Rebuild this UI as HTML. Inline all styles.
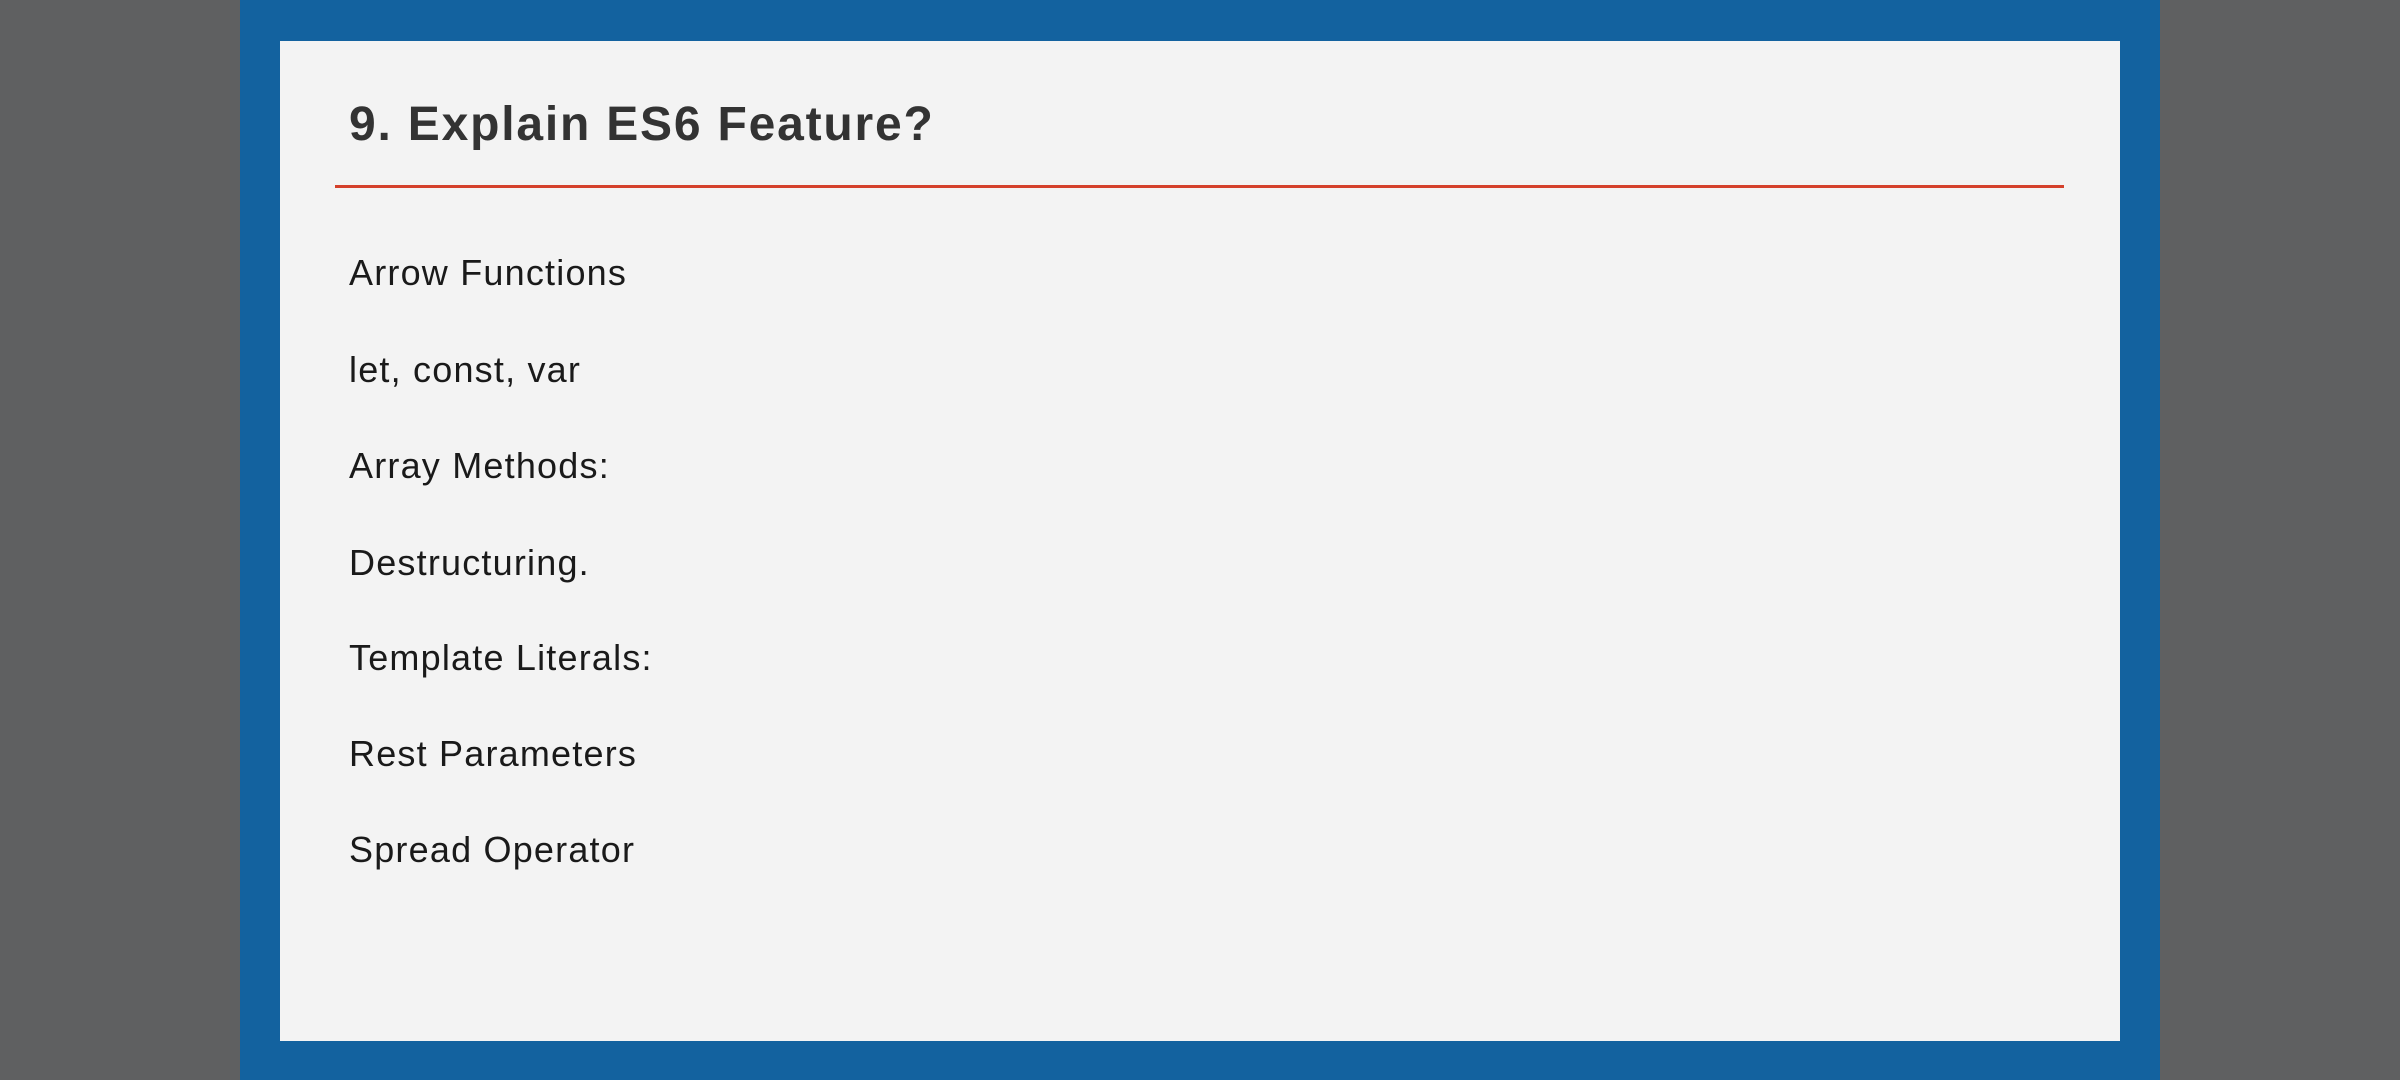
<!DOCTYPE html>
<html><head><meta charset="utf-8"><style>
html,body{margin:0;padding:0;}
body{width:2400px;height:1080px;background:#5f6061;position:relative;overflow:hidden;font-family:"Liberation Sans",sans-serif;}
.blue{position:absolute;left:240px;top:0;width:1920px;height:1080px;background:#13629f;}
.card{position:absolute;left:280px;top:41px;width:1840px;height:1000px;background:#f3f3f3;}
.title{position:absolute;left:349px;top:92px;font-size:48px;font-weight:bold;color:#333;line-height:66px;letter-spacing:1.8px;}
.line{position:absolute;left:335px;top:185px;width:1729px;height:3px;background:#d4402b;}
.item{position:absolute;left:349px;font-size:36px;color:#1a1a1a;line-height:44px;letter-spacing:1.2px;}
</style></head><body>
<div class="blue"></div>
<div class="card"></div>
<div class="title">9. Explain ES6 Feature?</div>
<div class="line"></div>
<div class="item" style="top:251px">Arrow Functions</div>
<div class="item" style="top:348px">let, const, var</div>
<div class="item" style="top:444px">Array Methods:</div>
<div class="item" style="top:541px">Destructuring.</div>
<div class="item" style="top:636px">Template Literals:</div>
<div class="item" style="top:732px">Rest Parameters</div>
<div class="item" style="top:828px">Spread Operator</div>
</body></html>
